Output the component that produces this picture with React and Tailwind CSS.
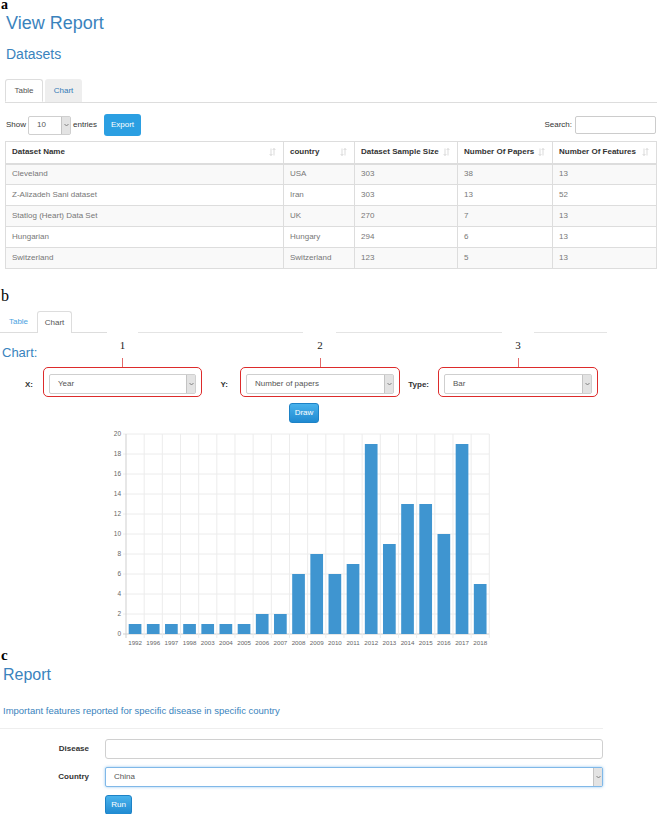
import React from "react";

const BLUE = "text-[#3a83bd]";

function Chevron() {
  return (
    <svg width="5" height="4" viewBox="0 0 5 4">
      <polyline points="0.5,1 2.5,3 4.5,1" fill="none" stroke="#777" strokeWidth="0.9" />
    </svg>
  );
}

function FakeSelect({ value, className, focused }) {
  return (
    <div
      className={
        focused
          ? `flex items-stretch border border-[#80b8e8] shadow-[0_0_3px_rgba(102,175,233,0.7)] bg-white rounded-[2px] ${className}`
          : `flex items-stretch border border-[#cfcfcf] bg-white rounded-[2px] ${className}`
      }
    >
      <div className="flex-1 flex items-center pl-[8px] text-[8px] text-[#555]">{value}</div>
      <div className="w-[9px] flex items-center justify-center bg-[#e3e3e3] border-l border-[#c4c4c4]">
        <Chevron />
      </div>
    </div>
  );
}

function SortIcon() {
  return (
    <svg width="7" height="8" viewBox="0 0 7 8">
      <g stroke="#d2d2d2" strokeWidth="0.8" fill="none">
        <line x1="2" y1="0.5" x2="2" y2="7.5" />
        <polyline points="0.6,6 2,7.5 3.4,6" />
        <line x1="5" y1="0.5" x2="5" y2="7.5" />
        <polyline points="3.6,2 5,0.5 6.4,2" />
      </g>
    </svg>
  );
}

const rows = [
  ["Cleveland", "USA", "303", "38", "13"],
  ["Z-Alizadeh Sani dataset", "Iran", "303", "13", "52"],
  ["Statlog (Heart) Data Set", "UK", "270", "7", "13"],
  ["Hungarian", "Hungary", "294", "6", "13"],
  ["Switzerland", "Switzerland", "123", "5", "13"],
];
const headers = ["Dataset Name", "country", "Dataset Sample Size", "Number Of Papers", "Number Of Features"];
const colW = ["w-[278px]", "w-[71px]", "w-[103px]", "w-[95px]", "w-[104px]"];

const years = [1992, 1996, 1997, 1998, 2003, 2004, 2005, 2006, 2007, 2008, 2009, 2010, 2011, 2012, 2013, 2014, 2015, 2016, 2017, 2018];
const values = [1, 1, 1, 1, 1, 1, 1, 2, 2, 6, 8, 6, 7, 19, 9, 13, 13, 10, 19, 5];

function Chart() {
  const left = 26;
  const right = 389.3;
  const top = 11;
  const bottom = 211;
  const cw = (right - left) / years.length;
  const ticks = [0, 2, 4, 6, 8, 10, 12, 14, 16, 18, 20];
  return (
    <svg width="400" height="225" viewBox="0 0 400 225" className="ml-[100px] block">
      {ticks.map((t) => (
        <line key={"h" + t} x1={left - 3} x2={right} y1={bottom - t * 10} y2={bottom - t * 10} stroke={t === 0 ? "#cfcfcf" : "#ececec"} strokeWidth="1" />
      ))}
      {years.map((y, i) => (
        <line key={"v" + i} x1={left + i * cw} x2={left + i * cw} y1={top} y2={bottom + 4} stroke={i === 0 ? "#cfcfcf" : "#ececec"} strokeWidth="1" />
      ))}
      <line x1={right} x2={right} y1={top} y2={bottom + 4} stroke="#ececec" strokeWidth="1" />
      {values.map((v, i) => (
        <rect key={"b" + i} x={left + i * cw + 2.7} y={bottom - v * 10} width={12.7} height={v * 10} fill="#3f95d0" />
      ))}
      {ticks.map((t) => (
        <text key={"yl" + t} x={21} y={bottom - t * 10 + 2.3} fontSize="6.5" fill="#666" textAnchor="end" fontFamily="Liberation Sans, Arial, sans-serif">
          {t}
        </text>
      ))}
      {years.map((y, i) => (
        <text key={"xl" + i} x={left + (i + 0.5) * cw} y={221.5} fontSize="6.2" fill="#666" textAnchor="middle" fontFamily="Liberation Sans, Arial, sans-serif">
          {y}
        </text>
      ))}
    </svg>
  );
}

function BoxCol({ num, widthCls, value }) {
  return (
    <div className={`flex flex-col items-center ${widthCls}`}>
      <div className="mt-[7px] h-[11px] leading-[11px] text-[11px] font-['Liberation_Serif',serif] text-[#222]">{num}</div>
      <div className="mt-[7px] h-[9px] w-[1px] bg-[#e26a6a]" />
      <div className="h-[30px] w-full border-[1.5px] border-[#dd2b2b] rounded-[5px] pt-[6px] pb-[1px] px-[5px]">
        <FakeSelect value={value} className="h-[20px] w-full" />
      </div>
    </div>
  );
}

function LabelCol({ label, widthCls, pr }) {
  return (
    <div className={`h-[30px] pt-[7px] pb-[2px] flex items-center justify-end ${widthCls} ${pr}`}>
      <span className="text-[8px] font-bold text-[#333]">{label}</span>
    </div>
  );
}

function BlueButton({ children, className }) {
  return (
    <div className={`flex items-center justify-center rounded-[3px] border border-[#1d82c6] bg-gradient-to-b from-[#48b2ec] to-[#1f8ad1] text-white text-[8px] ${className}`}>
      {children}
    </div>
  );
}

export default function App() {
  return (
    <div className="w-[657px] h-[814px] overflow-hidden bg-white font-['Liberation_Sans',Arial,sans-serif] text-[#333]">
      {/* Section a */}
      <div className="h-[10px] pl-[1px] leading-[9px] text-[14px] font-bold font-['Liberation_Serif',serif] text-black">a</div>
      <div className={`mt-[3px] h-[20px] leading-[20px] pl-[6px] text-[18px] ${BLUE}`}>View Report</div>
      <div className={`mt-[13px] h-[16px] leading-[16px] pl-[6px] text-[14px] ${BLUE}`}>Datasets</div>

      <div className="mt-[17px] ml-[5px] flex gap-[2px] border-b border-[#ddd]">
        <div className="w-[38px] h-[23px] -mb-[1px] bg-white border border-[#ddd] border-b-white rounded-t-[3px] flex items-center justify-center text-[8px] text-[#555]">Table</div>
        <div className="w-[37px] h-[23px] bg-[#eeeeee] rounded-t-[3px] flex items-center justify-center text-[8px] text-[#337ab7]">Chart</div>
      </div>

      <div className="mt-[11px] h-[22px] flex items-center justify-between pl-[6px] pr-[1px]">
        <div className="flex items-center text-[8px] text-[#333]">
          <span>Show</span>
          <FakeSelect value="10" className="ml-[2px] w-[43px] h-[19px]" />
          <span className="ml-[2px]">entries</span>
          <div className="ml-[7px] w-[37px] h-[22px] rounded-[3px] bg-[#2b9fe2] flex items-center justify-center text-white text-[8px]">Export</div>
        </div>
        <div className="flex items-center text-[8px] text-[#333]">
          <span className="mr-[3px]">Search:</span>
          <div className="w-[81px] h-[18px] border border-[#ccc] rounded-[2px] bg-white" />
        </div>
      </div>

      <table className="mt-[5px] ml-[5px] w-[651px] table-fixed border-collapse text-[8px]">
        <colgroup>
          {colW.map((w, i) => (
            <col key={i} className={w} />
          ))}
        </colgroup>
        <thead>
          <tr className="h-[22px]">
            {headers.map((h, i) => (
              <th key={i} className="border border-[#ddd] border-b-2 pl-[6px] pr-[7px] text-left font-bold text-[#333]">
                <div className="flex items-center justify-between">
                  <span>{h}</span>
                  <SortIcon />
                </div>
              </th>
            ))}
          </tr>
        </thead>
        <tbody>
          {rows.map((r, ri) => (
            <tr key={ri} className={ri % 2 === 0 ? "h-[21px] bg-[#f9f9f9]" : "h-[21px] bg-white"}>
              {r.map((c, ci) => (
                <td key={ci} className="border border-[#ddd] pl-[6px] text-[#777] whitespace-nowrap">
                  {c}
                </td>
              ))}
            </tr>
          ))}
        </tbody>
      </table>

      {/* Section b */}
      <div className="mt-[19px] h-[16px] leading-[16px] pl-[1px] text-[16px] font-['Liberation_Serif',serif] text-black">b</div>
      <div className="mt-[7px] flex h-[21px]">
        <div className="w-[37px] flex items-center justify-center text-[8px] text-[#4aa3df]">Table</div>
        <div className="w-[35px] h-[22px] bg-white border border-[#ddd] border-b-0 rounded-t-[3px] flex items-center justify-center text-[8px] text-[#555]">Chart</div>
      </div>
      <div className="flex h-[1px]">
        <div className="w-[37px] bg-[#ddd]" />
        <div className="w-[35px]" />
        <div className="w-[35px] bg-[#ddd]" />
        <div className="w-[31px]" />
        <div className="w-[165px] bg-[#e4e4e4]" />
        <div className="w-[33px]" />
        <div className="w-[166px] bg-[#e4e4e4]" />
        <div className="w-[32px]" />
        <div className="w-[73px] bg-[#e4e4e4]" />
      </div>

      <div className="flex items-end">
        <div className="flex flex-col w-[43px]">
          <div className={`mt-[12px] h-[15px] leading-[15px] pl-[2px] text-[13px] ${BLUE}`}>Chart:</div>
          <div className="mt-[7px]">
            <LabelCol label="X:" widthCls="w-[43px]" pr="pr-[10px]" />
          </div>
        </div>
        <BoxCol num="1" widthCls="w-[159px]" value="Year" />
        <LabelCol label="Y:" widthCls="w-[38px]" pr="pr-[12px]" />
        <BoxCol num="2" widthCls="w-[160px]" value="Number of papers" />
        <LabelCol label="Type:" widthCls="w-[38px]" pr="pr-[9px]" />
        <BoxCol num="3" widthCls="w-[160px]" value="Bar" />
      </div>

      <BlueButton className="mt-[6px] ml-[289px] w-[30px] h-[20px]">Draw</BlueButton>

      <Chart />

      {/* Section c */}
      <div className="h-[15px] leading-[15px] pl-[1px] text-[15px] font-bold font-['Liberation_Serif',serif] text-black">c</div>
      <div className={`mt-[3px] h-[18px] leading-[18px] pl-[3px] text-[16px] ${BLUE}`}>Report</div>
      <div className={`mt-[21px] h-[12px] leading-[12px] pl-[3px] text-[9.5px] ${BLUE}`}>Important features reported for specific disease in specific country</div>
      <div className="mt-[11px] h-[1px] w-[603px] bg-[#eeeeee]" />

      <div className="mt-[10px] flex items-center h-[20px]">
        <div className="w-[89px] text-right text-[8px] font-bold text-[#333]">Disease</div>
        <div className="ml-[16px] w-[498px] h-[20px] border border-[#d0d0d0] rounded-[3px] bg-white" />
      </div>
      <div className="mt-[8px] flex items-center h-[20px]">
        <div className="w-[89px] text-right text-[8px] font-bold text-[#333]">Country</div>
        <FakeSelect focused value="China" className="ml-[16px] w-[498px] h-[20px]" />
      </div>
      <BlueButton className="mt-[8px] ml-[105px] w-[27px] h-[20px]">Run</BlueButton>
    </div>
  );
}
